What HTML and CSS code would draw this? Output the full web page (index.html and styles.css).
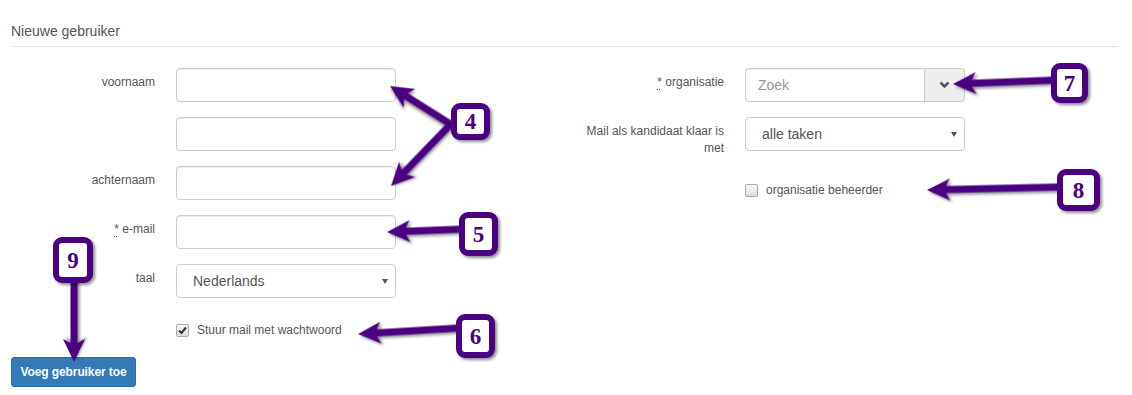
FILE: index.html
```html
<!DOCTYPE html>
<html>
<head>
  <title>Nieuwe gebruiker</title>
  <link rel="stylesheet" href="styles.css">
</head>
<body>
  <div class="page">
    <h4 class="legend">Nieuwe gebruiker</h4>
    <form class="user-form">
      <div class="column">
        <label class="control-label" for="voornaam">voornaam</label>
        <input class="field" type="text" id="voornaam">

        <span class="control-label"></span>
        <input class="field" type="text">

        <label class="control-label" for="achternaam">achternaam</label>
        <input class="field" type="text" id="achternaam">

        <label class="control-label" for="email"><abbr title="verplicht">*</abbr> e-mail</label>
        <input class="field" type="email" id="email">

        <label class="control-label" for="taal">taal</label>
        <div class="select-wrap">
          <select class="field select" id="taal"><option>Nederlands</option><option>English</option></select>
        </div>

        <span class="control-label"></span>
        <label class="check">
          <span class="box"><svg width="11" height="11" viewBox="0 0 11 11"><path d="M2 5.5 L4.5 8 L9 2.5" fill="none" stroke="#333" stroke-width="2"/></svg></span>
          Stuur mail met wachtwoord
        </label>

        <button type="button" class="btn-primary">Voeg gebruiker toe</button>
      </div>

      <div class="column">
        <label class="control-label" for="organisatie"><abbr title="verplicht">*</abbr> organisatie</label>
        <div class="input-group">
          <input class="field" type="text" id="organisatie" placeholder="Zoek">
          <span class="addon"><svg width="11" height="8" viewBox="0 0 11 8"><path d="M1.5 1.5 L5.5 5.5 L9.5 1.5" fill="none" stroke="#555" stroke-width="2.6"/></svg></span>
        </div>

        <label class="control-label" for="mail">Mail als kandidaat klaar is met</label>
        <div class="select-wrap">
          <select class="field select" id="mail"><option>alle taken</option><option>eerste taak</option></select>
        </div>

        <span class="control-label"></span>
        <label class="check">
          <span class="box"></span>
          organisatie beheerder
        </label>
      </div>
    </form>

    <!-- annotations -->
    <svg class="notes" width="1132" height="395" viewBox="0 0 1132 395">
      <g class="arrows">
        <path transform="translate(390 86) rotate(32.2)" d="M0 0 L23 -11 L19 -3.5 L73 -3.5 L73 3.5 L19 3.5 L23 11 Z"/>
        <path transform="translate(391 186) rotate(-46)" d="M0 0 L23 -11 L19 -3.5 L85 -3.5 L85 3.5 L19 3.5 L23 11 Z"/>
        <path transform="translate(387 232) rotate(-2.2)" d="M0 0 L23 -11 L19 -3.5 L78 -3.5 L78 3.5 L19 3.5 L23 11 Z"/>
        <path transform="translate(358 334) rotate(-3.4)" d="M0 0 L23 -11 L19 -3.5 L102 -3.5 L102 3.5 L19 3.5 L23 11 Z"/>
        <path transform="translate(953 84) rotate(-2.2)" d="M0 0 L23 -11 L19 -3.5 L102 -3.5 L102 3.5 L19 3.5 L23 11 Z"/>
        <path transform="translate(927 190) rotate(-1.3)" d="M0 0 L23 -11 L19 -3.5 L135 -3.5 L135 3.5 L19 3.5 L23 11 Z"/>
        <path transform="translate(74 362) rotate(-90)" d="M0 0 L23 -11 L19 -3.5 L82 -3.5 L82 3.5 L19 3.5 L23 11 Z"/>
      </g>
      <g class="badges">
        <rect x="454" y="106" width="33" height="31" rx="6"/>
        <text x="470.5" y="129">4</text>
        <rect x="462" y="215" width="33" height="38" rx="6"/>
        <text x="478.5" y="241.5">5</text>
        <rect x="459" y="317" width="33" height="38" rx="6"/>
        <text x="475.5" y="343.5">6</text>
        <rect x="1054" y="66" width="31" height="34" rx="6"/>
        <text x="1069.5" y="90.5">7</text>
        <rect x="1060" y="172" width="37" height="36" rx="6"/>
        <text x="1078.5" y="197.5">8</text>
        <rect x="56" y="240" width="34" height="40" rx="6"/>
        <text x="73" y="267.5">9</text>
      </g>
    </svg>
  </div>
</body>
</html>
```

FILE: styles.css
```css
html, body {
  margin: 0;
  background: #ffffff;
  color: #555;
  font-family: 'Liberation Sans', Arial, sans-serif;
}
.page {
  position: relative;
  width: 1132px;
  height: 395px;
  box-sizing: border-box;
  padding: 21px 14px 0 11px;
  overflow: hidden;
}
.legend {
  margin: 0;
  font-size: 14px;
  font-weight: normal;
  line-height: 20px;
  color: #555;
  padding-bottom: 5px;
  border-bottom: 1px solid #e5e5e5;
}
.user-form {
  display: grid;
  grid-template-columns: 569px 1fr;
  margin-top: 21px;
}
.column {
  display: grid;
  grid-template-columns: 144px 220px;
  column-gap: 21px;
  row-gap: 15px;
  align-content: start;
}
.control-label {
  text-align: right;
  padding-top: 6px;
  padding-bottom: 1px;
  font-size: 12px;
  line-height: 17px;
  color: #555;
}
abbr {
  text-decoration: underline dotted;
  text-underline-offset: 3px;
  cursor: help;
}
.field {
  box-sizing: border-box;
  width: 100%;
  height: 34px;
  margin: 0;
  padding: 0 12px;
  border: 1px solid #ccc;
  border-radius: 4px;
  background: #fff;
  box-shadow: inset 0 1px 1px rgba(0, 0, 0, .075);
  font-family: inherit;
  font-size: 14px;
  color: #555;
}
.field::placeholder {
  color: #999;
}
.select-wrap {
  position: relative;
}
.select {
  -webkit-appearance: none;
  appearance: none;
  padding: 0 16px;
  box-shadow: none;
}
.select-wrap::after {
  content: "";
  position: absolute;
  right: 8px;
  top: 15px;
  border-left: 3.5px solid transparent;
  border-right: 3.5px solid transparent;
  border-top: 5px solid #555;
  pointer-events: none;
}
.input-group {
  display: flex;
}
.input-group .field {
  border-radius: 4px 0 0 4px;
}
.addon {
  box-sizing: border-box;
  flex: 0 0 40px;
  height: 34px;
  display: flex;
  align-items: center;
  justify-content: center;
  background: #eee;
  border: 1px solid #ccc;
  border-left: none;
  border-radius: 0 4px 4px 0;
}
.check {
  display: flex;
  align-items: center;
  gap: 8px;
  padding: 11px 0 5px;
  font-size: 12px;
  line-height: 13px;
  color: #555;
}
.box {
  box-sizing: border-box;
  width: 13px;
  height: 13px;
  display: flex;
  align-items: center;
  justify-content: center;
  border: 1px solid #a9a9a9;
  border-radius: 2px;
  background: linear-gradient(#f6f6f6, #dedede);
}
.btn-primary {
  grid-column: 1 / -1;
  justify-self: start;
  height: 30px;
  padding: 0 8.5px;
  border: 1px solid #2e6da4;
  border-radius: 3px;
  background-color: #337ab7;
  color: #fff;
  font-family: inherit;
  font-size: 12px;
  font-weight: bold;
  letter-spacing: -0.1px;
  cursor: pointer;
}
.notes {
  position: absolute;
  top: 0;
  left: 0;
  pointer-events: none;
}
.arrows path {
  fill: #4b0082;
  filter: drop-shadow(2px 2px 1.5px rgba(0, 0, 0, .45));
}
.badges rect {
  fill: #fff;
  stroke: #4b0082;
  stroke-width: 6;
  filter: drop-shadow(2px 2px 1.5px rgba(0, 0, 0, .45));
}
.badges text {
  fill: #4b0082;
  font-family: 'Liberation Serif', 'Times New Roman', serif;
  font-weight: bold;
  font-size: 23px;
  text-anchor: middle;
}
```
